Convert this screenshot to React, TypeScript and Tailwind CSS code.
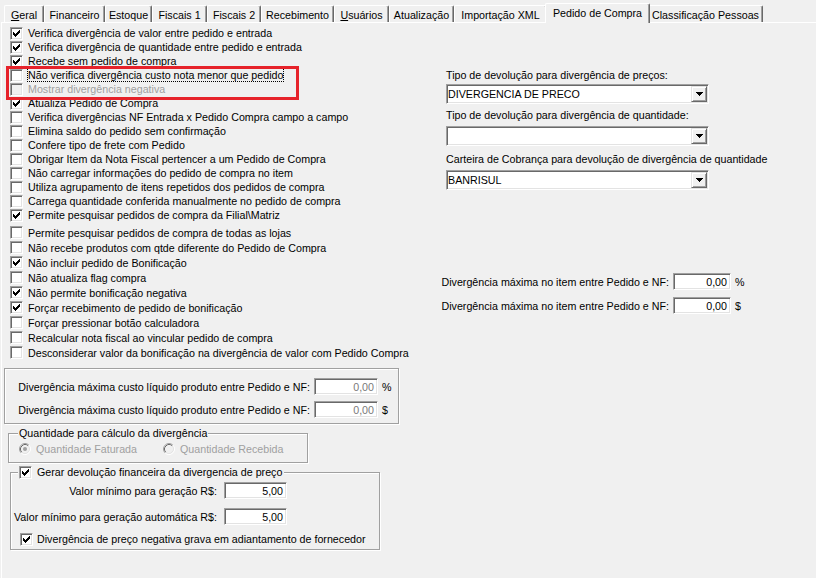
import React from "react";

const CHECK =
  "M6 0h1v1h-1z M5 1h2v1h-2z M0 2h1v1h-1z M4 2h3v1h-3z M0 3h2v1h-2z M3 3h3v1h-3z M0 4h5v1h-5z M1 5h3v1h-3z M2 6h1v1h-1z";
const ARROW = "M0 0h7v1h-7z M1 1h5v1h-5z M2 2h3v1h-3z M3 3h1v1h-1z";

const sunken =
  "border border-t-[#a0a0a0] border-l-[#a0a0a0] border-r-white border-b-white shadow-[inset_1px_1px_0_#696969,inset_-1px_-1px_0_#e3e3e3]";
const etched =
  "border border-[#a0a0a0] shadow-[inset_1px_1px_0_#fff,1px_1px_0_#fff]";

function CheckBox({ checked, disabled }: { checked?: boolean; disabled?: boolean }) {
  return (
    <span
      className={`flex h-[13px] w-[13px] shrink-0 items-center justify-center ${sunken} ${
        disabled ? "bg-[#f0f0f0]" : "bg-white"
      }`}
    >
      {checked && (
        <svg width="7" height="7" viewBox="0 0 7 7" shapeRendering="crispEdges">
          <path d={CHECK} fill={disabled ? "#a0a0a0" : "#000"} />
        </svg>
      )}
    </span>
  );
}

function Radio({ selected }: { selected?: boolean }) {
  return (
    <svg width="12" height="12" viewBox="0 0 12 12" className="shrink-0">
      <circle cx="6" cy="6" r="5" fill="#f0f0f0" />
      <path d="M2.11 9.89 A5.5 5.5 0 0 1 9.89 2.11" fill="none" stroke="#a0a0a0" />
      <path d="M9.89 2.11 A5.5 5.5 0 0 1 2.11 9.89" fill="none" stroke="#fff" />
      <path d="M2.82 9.18 A4.5 4.5 0 0 1 9.18 2.82" fill="none" stroke="#696969" />
      <path d="M9.18 2.82 A4.5 4.5 0 0 1 2.82 9.18" fill="none" stroke="#e3e3e3" />
      {selected && <circle cx="6" cy="6" r="2" fill="#a0a0a0" />}
    </svg>
  );
}

function Field({ value, w, muted }: { value: string; w: string; muted?: boolean }) {
  return (
    <div
      className={`flex h-[17px] shrink-0 items-center justify-end bg-white pr-[3px] ${w} ${sunken} ${
        muted ? "text-[#7a7a7a]" : "text-black"
      }`}
    >
      {value}
    </div>
  );
}

function Combo({ value }: { value: string }) {
  return (
    <div className={`flex h-[20px] w-[263px] items-center bg-white pl-[1px] pr-[1px] ${sunken}`}>
      <span className="flex-1 whitespace-nowrap">{value}</span>
      <span className="flex h-[16px] w-[16px] items-center justify-center border border-t-[#e3e3e3] border-l-[#e3e3e3] border-r-[#696969] border-b-[#696969] bg-[#f0f0f0] shadow-[inset_1px_1px_0_#fff,inset_-1px_-1px_0_#a0a0a0]">
        <svg width="7" height="4" viewBox="0 0 7 4" shapeRendering="crispEdges">
          <path d={ARROW} fill="#000" />
        </svg>
      </span>
    </div>
  );
}

// right-aligned caption; overflow goes to the left so the field stays put
function Caption({ w, children }: { w: string; children: React.ReactNode }) {
  return (
    <span className={`flex shrink-0 justify-end whitespace-nowrap ${w}`}>
      <span>{children}</span>
    </span>
  );
}

type Row = { label: string; checked?: boolean; disabled?: boolean; focus?: boolean };

const groupA: Row[] = [
  { label: "Verifica divergência de valor entre pedido e entrada", checked: true },
  { label: "Verifica divergência de quantidade entre pedido e entrada", checked: true },
  { label: "Recebe sem pedido de compra", checked: true },
  { label: "Não verifica divergência custo nota menor que pedido", focus: true },
  { label: "Mostrar divergência negativa", disabled: true },
  { label: "Atualiza Pedido de Compra", checked: true },
  { label: "Verifica divergências NF Entrada x Pedido Compra campo a campo" },
  { label: "Elimina saldo do pedido sem confirmação" },
  { label: "Confere tipo de frete com Pedido" },
  { label: "Obrigar Item da Nota Fiscal pertencer a um Pedido de Compra" },
  { label: "Não carregar informações do pedido de compra no item" },
  { label: "Utiliza agrupamento de itens repetidos dos pedidos de compra" },
  { label: "Carrega quantidade conferida manualmente no pedido de compra" },
  { label: "Permite pesquisar pedidos de compra da Filial\\Matriz", checked: true },
];

const groupB: Row[] = [
  { label: "Permite pesquisar pedidos de compra de todas as lojas" },
  { label: "Não recebe produtos com qtde diferente do Pedido de Compra" },
  { label: "Não incluir pedido de Bonificação", checked: true },
  { label: "Não atualiza flag compra" },
  { label: "Não permite bonificação negativa", checked: true },
  { label: "Forçar recebimento de pedido de bonificação", checked: true },
  { label: "Forçar pressionar botão calculadora" },
  { label: "Recalcular nota fiscal ao vincular pedido de compra" },
  { label: "Desconsiderar valor da bonificação na divergência de valor com Pedido Compra" },
];

const tabs: { label: React.ReactNode; w: string; active?: boolean }[] = [
  { label: <><span className="underline">G</span>eral</>, w: "w-[40px]" },
  { label: "Financeiro", w: "w-[61px]" },
  { label: "Estoque", w: "w-[47px]" },
  { label: "Fiscais 1", w: "w-[55px]" },
  { label: "Fiscais 2", w: "w-[54px]" },
  { label: "Recebimento", w: "w-[73px]" },
  { label: <><span className="underline">U</span>suários</>, w: "w-[55px]" },
  { label: "Atualização", w: "w-[65px]" },
  { label: "Importação XML", w: "w-[93px]" },
  { label: "Pedido de Compra", w: "w-[105px]", active: true },
  { label: "Classificação Pessoas", w: "w-[115px]" },
];

function CheckRow({ row, h }: { row: Row; h: string }) {
  return (
    <div className={`flex ${h} items-center gap-[5px] pl-[8px] whitespace-nowrap`}>
      <CheckBox checked={row.checked} disabled={row.disabled} />
      {row.focus ? (
        <span className="-ml-px border border-dotted border-black leading-[12px]">{row.label}</span>
      ) : (
        <span className={row.disabled ? "text-[#a0a0a0]" : ""}>{row.label}</span>
      )}
    </div>
  );
}

export default function App() {
  return (
    <div className="relative h-[578px] w-[816px] overflow-hidden bg-[#f0f0f0] font-['Liberation_Sans',Arial,sans-serif] text-[10.7px] leading-[14px] text-black">
      {/* tab strip */}
      <div className="flex h-[22px] items-end pl-[4px]">
        {tabs.map((t, i) =>
          t.active ? (
            <div
              key={i}
              className={`relative z-10 -mx-[2px] -mb-px h-[20px] ${t.w} shrink-0 whitespace-nowrap rounded-t-[2px] border-l border-r border-t border-l-white border-r-[#696969] border-t-white bg-[#f0f0f0] pt-[2px] text-center shadow-[inset_-1px_0_0_#a0a0a0]`}
            >
              {t.label}
            </div>
          ) : (
            <div
              key={i}
              className={`h-[17px] ${t.w} shrink-0 whitespace-nowrap rounded-t-[2px] border-l border-r border-t border-l-white border-r-[#696969] border-t-white pt-[2px] text-center shadow-[inset_-1px_0_0_#a0a0a0]`}
            >
              {t.label}
            </div>
          )
        )}
      </div>

      {/* tab page */}
      <div className="ml-px flex h-[556px] border-l border-t border-white">
        <div className="flex w-[444px] shrink-0 flex-col pt-[3px]">
          {groupA.map((r, i) => (
            <CheckRow key={i} row={r} h="h-[14px]" />
          ))}
          <div className="mt-[3px] flex flex-col">
            {groupB.map((r, i) => (
              <CheckRow key={i} row={r} h="h-[15px]" />
            ))}
          </div>

          {/* divergência custo líquido */}
          <div className={`ml-[2px] mt-[8px] h-[56px] w-[395px] pt-[9px] ${etched}`}>
            <div className="flex items-center">
              <Caption w="w-[305px]">Divergência máxima custo líquido produto entre Pedido e NF:</Caption>
              <div className="ml-[4px]">
                <Field value="0,00" w="w-[64px]" muted />
              </div>
              <span className="ml-[4px]">%</span>
            </div>
            <div className="mt-[6px] flex items-center">
              <Caption w="w-[305px]">Divergência máxima custo líquido produto entre Pedido e NF:</Caption>
              <div className="ml-[4px]">
                <Field value="0,00" w="w-[64px]" muted />
              </div>
              <span className="ml-[4px]">$</span>
            </div>
          </div>

          {/* quantidade para cálculo */}
          <div className={`ml-[6px] mt-[9px] h-[30px] w-[300px] ${etched}`}>
            <div className="-mt-[8px] ml-[9px] w-fit whitespace-nowrap bg-[#f0f0f0] px-[1px]">
              Quantidade para cálculo da divergência
            </div>
            <div className="mt-[2px] flex h-[14px] items-center pl-[10px] text-[#a0a0a0]">
              <div className="flex w-[144px] items-center gap-[5px]">
                <Radio selected />
                <span className="whitespace-nowrap">Quantidade Faturada</span>
              </div>
              <div className="flex items-center gap-[5px]">
                <Radio />
                <span className="whitespace-nowrap">Quantidade Recebida</span>
              </div>
            </div>
          </div>

          {/* devolução financeira */}
          <div className={`ml-[8px] mt-[9px] h-[78px] w-[370px] ${etched}`}>
            <div className="-mt-[8px] ml-[7px] flex h-[14px] w-fit items-center gap-[5px] whitespace-nowrap bg-[#f0f0f0] pl-[1px] pr-[2px]">
              <CheckBox checked />
              <span>Gerar devolução financeira da divergencia de preço</span>
            </div>
            <div className="mt-[3px] flex items-center">
              <Caption w="w-[206px]">Valor mínimo para geração R$:</Caption>
              <div className="ml-[7px]">
                <Field value="5,00" w="w-[63px]" />
              </div>
            </div>
            <div className="mt-[9px] flex items-center">
              <Caption w="w-[206px]">Valor mínimo para geração automática R$:</Caption>
              <div className="ml-[7px]">
                <Field value="5,00" w="w-[63px]" />
              </div>
            </div>
            <div className="mt-[7px] flex h-[14px] items-center gap-[4px] pl-[9px] whitespace-nowrap">
              <CheckBox checked />
              <span>Divergência de preço negativa grava em adiantamento de fornecedor</span>
            </div>
          </div>
        </div>

        {/* right column */}
        <div className="flex flex-col pt-[45px]">
          <span className="whitespace-nowrap">Tipo de devolução para divergência de preços:</span>
          <div className="mt-[2px]">
            <Combo value="DIVERGENCIA DE PRECO" />
          </div>
          <span className="mt-[4px] whitespace-nowrap">Tipo de devolução para divergência de quantidade:</span>
          <div className="mt-[4px]">
            <Combo value="" />
          </div>
          <span className="mt-[6px] whitespace-nowrap">
            Carteira de Cobrança para devolução de divergência de quantidade
          </span>
          <div className="mt-[4px]">
            <Combo value="BANRISUL" />
          </div>

          <div className="mt-[83px] flex items-center">
            <Caption w="w-[223px]">Divergência máxima no item entre Pedido e NF:</Caption>
            <div className="ml-[4px]">
              <Field value="0,00" w="w-[58px]" />
            </div>
            <span className="ml-[4px]">%</span>
          </div>
          <div className="mt-[7px] flex items-center">
            <Caption w="w-[223px]">Divergência máxima no item entre Pedido e NF:</Caption>
            <div className="ml-[4px]">
              <Field value="0,00" w="w-[58px]" />
            </div>
            <span className="ml-[4px]">$</span>
          </div>
        </div>
      </div>

      {/* highlight annotation */}
      <div className="pointer-events-none absolute left-[6px] top-[66px] h-[34px] w-[293px] border-[3px] border-[#e6222a]" />
    </div>
  );
}
